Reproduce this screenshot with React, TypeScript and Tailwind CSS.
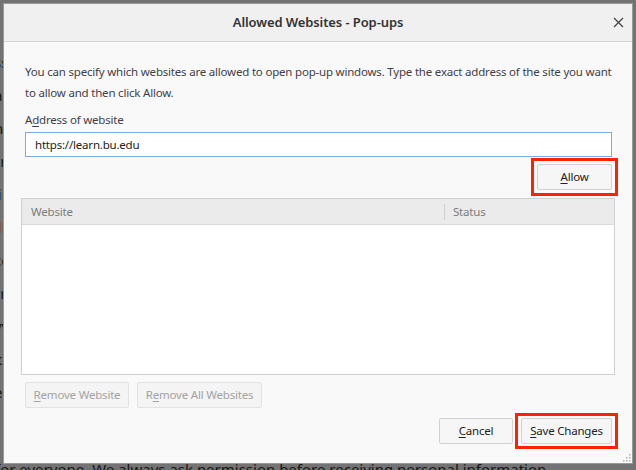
import React from 'react';

const font = { fontFamily: '"Noto Sans", "Open Sans", sans-serif' };

// Small underlined access-key letter
const Key = ({ children }: { children: React.ReactNode }) => (
  <span className="underline underline-offset-2">{children}</span>
);

function DialogButton({
  children,
  className = '',
  disabled = false,
}: {
  children: React.ReactNode;
  className?: string;
  disabled?: boolean;
}) {
  return (
    <button
      className={`h-[26px] rounded-[2px] border text-[11.5px] tracking-[-0.2px] ${
        disabled
          ? 'border-[#e2e2e2] bg-[#f4f4f4] text-[#a3a3a3]'
          : 'border-[#d2d2d2] bg-[#f6f6f6] text-[#222]'
      } ${className}`}
    >
      {children}
    </button>
  );
}

export default function App() {
  return (
    <div className="relative h-[470px] w-[636px] overflow-hidden bg-[#737373]" style={font}>
      {/* Page behind the dialog */}
      <div className="flex flex-col pt-[46px] text-[15px] leading-[33px] text-[#161616] -ml-[6px]">
        <span>sss</span>
        <span>aaa</span>
        <span>nnn</span>
        <span>rrr</span>
        <span>iii</span>
        <span className="text-[#7a3c00]">lll</span>
        <span>ccc</span>
        <span>rrr</span>
        <span>vvv</span>
        <span>xxx</span>
        <span>eee</span>
      </div>
      <div className="absolute left-[-5px] top-[458px] whitespace-nowrap text-[15px] text-[#161616]">
        for everyone. We always ask permission before receiving personal information.
      </div>

      {/* Dialog */}
      <div className="absolute left-[3px] top-[3px] flex h-[461px] w-[630px] flex-col border border-[#9a9a9a] bg-[#f9f9f9]">
        {/* Title bar */}
        <div className="relative flex h-[38px] shrink-0 items-center justify-center border-b border-[#d4d4d4] bg-[#f0f0f0]">
          <span className="text-[13px] font-semibold tracking-[-0.1px] text-[#333]">Allowed Websites - Pop-ups</span>
          <svg className="absolute right-[8px] top-[13px]" width="11" height="11" viewBox="0 0 11 11">
            <path d="M1 1 L10 10 M10 1 L1 10" stroke="#444" strokeWidth="1.3" />
          </svg>
        </div>

        {/* Body */}
        <div className="flex flex-1 flex-col px-[17px] pt-[19px] text-[11.5px] tracking-[-0.2px]">
          <p className="pl-[4px] leading-[21px] tracking-[-0.2px] text-[#3f3f48]">
            You can specify which websites are allowed to open pop-up windows. Type the exact address of the site you want
            <br />
            to allow and then click Allow.
          </p>
          <label className="mt-[6px] px-[4px] leading-[21px] text-[#3f3f48]">
            A<Key>d</Key>dress of website
          </label>
          <div className="ml-[4px] mr-[3px] mt-[2px] flex h-[25px] items-center border border-[#7eaaea] bg-white px-[9px] text-[#222]">
            https://learn.bu.edu
          </div>

          <div className="mt-[7px] flex justify-end pr-[3px]">
            <div className="relative">
              <DialogButton className="w-[75px]">
                <Key>A</Key>llow
              </DialogButton>
              <span className="pointer-events-none absolute -inset-[6px] border-[3px] border-[#ff2200]" />
            </div>
          </div>

          {/* Websites table */}
          <div className="mt-[8px] flex h-[177px] flex-col border border-[#d0d0d0] bg-white">
            <div className="flex h-[26px] items-center border-b border-[#dadada] bg-[#ebebeb] text-[#7b7b7b]">
              <span className="flex-1 pl-[9px]">Website</span>
              <span className="h-[16px] w-px bg-[#cfcfcf]" />
              <span className="w-[169px] pl-[8px]">Status</span>
            </div>
          </div>

          <div className="mt-[7px] flex gap-[8px] px-[4px]">
            <DialogButton disabled className="w-[104px]">
              <Key>R</Key>emove Website
            </DialogButton>
            <DialogButton disabled className="w-[125px]">
              R<Key>e</Key>move All Websites
            </DialogButton>
          </div>

          <div className="mt-[10px] flex justify-end gap-[8px] pr-[3px]">
            <DialogButton className="w-[74px]">
              <Key>C</Key>ancel
            </DialogButton>
            <div className="relative">
              <DialogButton className="w-[91px]">
                <Key>S</Key>ave Changes
              </DialogButton>
              <span className="pointer-events-none absolute -inset-x-[6px] -inset-y-[5px] border-[3px] border-[#ff2200]" />
            </div>
          </div>
        </div>

        {/* Resize grip */}
        <svg className="absolute bottom-[1px] right-[1px]" width="8" height="8" viewBox="0 0 8 8">
          <rect x="6" y="0" width="1.5" height="1.5" fill="#b0b0b0" />
          <rect x="3" y="3" width="1.5" height="1.5" fill="#b0b0b0" />
          <rect x="6" y="3" width="1.5" height="1.5" fill="#b0b0b0" />
          <rect x="0" y="6" width="1.5" height="1.5" fill="#b0b0b0" />
          <rect x="3" y="6" width="1.5" height="1.5" fill="#b0b0b0" />
          <rect x="6" y="6" width="1.5" height="1.5" fill="#b0b0b0" />
        </svg>
      </div>
    </div>
  );
}
